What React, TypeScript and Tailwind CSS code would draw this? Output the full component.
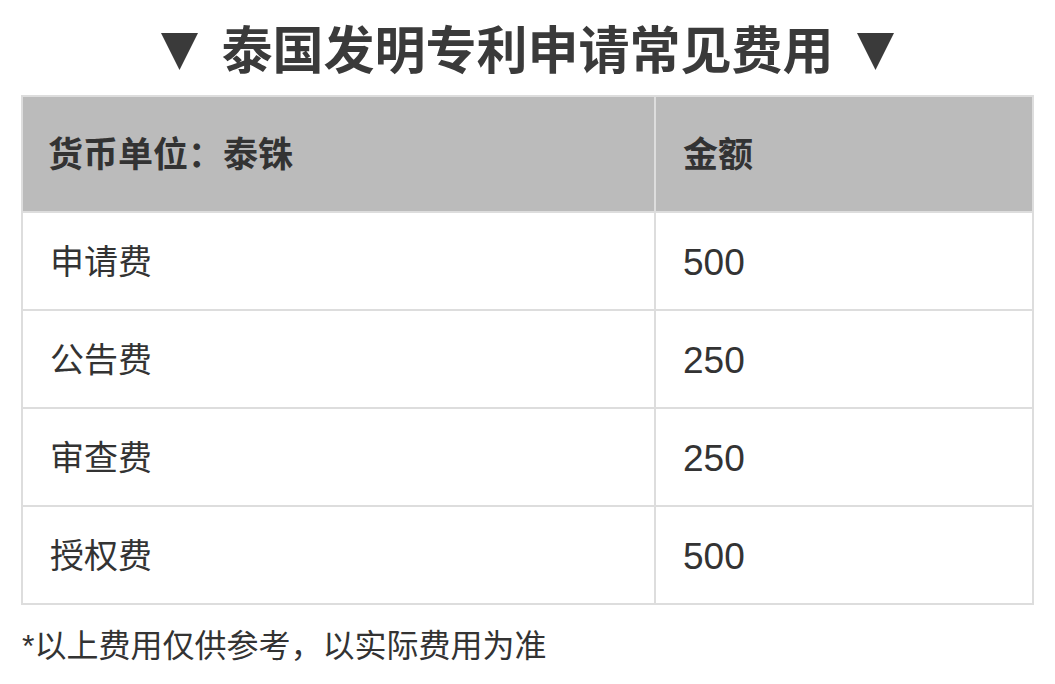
import React from "react";

const rows: [string, string][] = [
  ["申请费", "500"],
  ["公告费", "250"],
  ["审查费", "250"],
  ["授权费", "500"],
];

function Tri() {
  return (
    <svg width="37" height="37" viewBox="0 0 37 37" className="shrink-0">
      <polygon points="0,0 37,0 18.5,37" fill="#3a3a3a" />
    </svg>
  );
}

export default function App() {
  return (
    <div className="w-[1055px] h-[684px] bg-white px-[21px] text-[#333333] font-['Liberation_Sans','Noto_Sans_CJK_SC',sans-serif]">
      <h1 className="h-[95px] pt-[8px] flex items-center justify-center gap-[23px] text-[51px] font-bold leading-none text-[#3a3a3a]">
        <Tri />
        <span>泰国发明专利申请常见费用</span>
        <Tri />
      </h1>
      <div className="border-2 border-[#dddddd]">
        <div className="flex h-[116px] bg-[#bbbbbb] border-b-2 border-[#dddddd]">
          <div className="w-[633px] border-r-2 border-[#dddddd] flex items-center pl-[25px] pt-[3px] text-[35px] font-bold">
            货币单位：泰铢
          </div>
          <div className="flex-1 flex items-center pl-[27px] pt-[3px] text-[35px] font-bold">
            金额
          </div>
        </div>
        {rows.map(([name, amount], i) => (
          <div
            key={i}
            className={`flex ${i < rows.length - 1 ? "h-[98px] border-b-2 border-[#dddddd]" : "h-[96px]"}`}
          >
            <div className="w-[633px] border-r-2 border-[#dddddd] flex items-center pl-[27px] pt-[3px] text-[34px]">
              {name}
            </div>
            <div className="flex-1 flex items-center pl-[27px] pt-[3px] text-[37px]">
              {amount}
            </div>
          </div>
        ))}
      </div>
      <p className="mt-[19px] text-[32px] leading-[44px] pl-[1px]">
        *以上费用仅供参考，以实际费用为准
      </p>
    </div>
  );
}
